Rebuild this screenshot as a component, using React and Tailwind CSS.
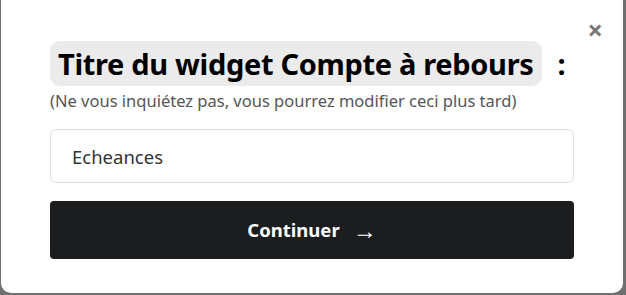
import { useState } from 'react';

export default function App() {
  const [title, setTitle] = useState('Echeances');

  return (
    <div className="w-[626px] h-[295px] bg-[#6f6f6f] overflow-hidden" style={{ fontFamily: '"Noto Sans", "Open Sans", sans-serif' }}>
      <div className="relative ml-px w-[622px] h-[293px] bg-white rounded-b-[10px] px-[49px] pt-[41px]">
        <button className="absolute right-[20px] top-[16px] text-[#777777] text-[27px] leading-none font-bold">
          ×
        </button>

        <div className="flex items-center">
          <h2 className="bg-[#ebebeb] rounded-[10px] px-[8px] h-[45px] flex items-center text-[29px] font-bold text-black tracking-[-0.32px]">
            Titre du widget Compte à rebours
          </h2>
          <span className="ml-[16px] text-[29px] font-bold text-black">:</span>
        </div>

        <p className="mt-[4px] text-[16.5px] text-[#555555] leading-[22px]">
          (Ne vous inquiétez pas, vous pourrez modifier ceci plus tard)
        </p>

        <input
          value={title}
          onChange={(e) => setTitle(e.target.value)}
          className="mt-[17px] w-[524px] h-[54px] border border-[#dddddd] rounded-[6px] px-[21px] text-[18.5px] text-[#333333] outline-none"
        />

        <button className="mt-[18px] w-[524px] h-[58px] bg-[#1c1d1f] rounded-[4px] text-white text-[18.5px] font-bold flex items-center justify-center gap-[13px]">
          <span>Continuer</span>
          <span className="font-normal text-[24px] leading-none">→</span>
        </button>
      </div>
    </div>
  );
}
